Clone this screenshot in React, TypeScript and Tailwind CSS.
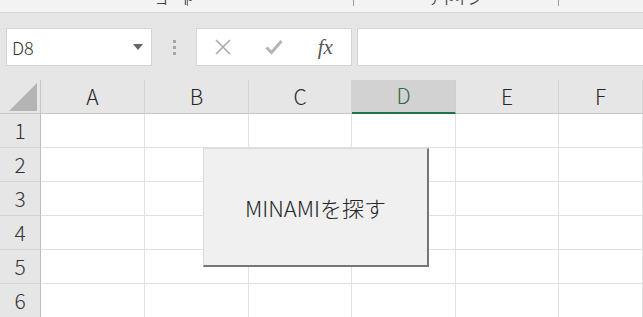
import React from 'react'

const FONT = { fontFamily: '"Noto Sans CJK JP", "Noto Sans", sans-serif' }

type Col = { key: string; width: string; selected?: boolean }

const COLUMNS: Col[] = [
  { key: 'A', width: 'w-[104px]' },
  { key: 'B', width: 'w-[104px]' },
  { key: 'C', width: 'w-[103px]' },
  { key: 'D', width: 'w-[104px]', selected: true },
  { key: 'E', width: 'w-[103px]' },
  { key: 'F', width: 'flex-1' },
]

const ROWS = [1, 2, 3, 4, 5, 6]

const CornerTriangle = () => (
  <svg width="28" height="28" viewBox="0 0 28 28" aria-hidden="true">
    <polygon points="28,0 28,28 0,28" fill="#b4b4b4" />
  </svg>
)

const FormulaBar = () => (
  <div className="flex h-[67px] items-start pt-[15px]">
    <div className="ml-[6px] flex h-[38px] w-[146px] items-center justify-between border border-[#d4d4d4] bg-white pl-[5px] pr-[8px]">
      <span className="text-[18px] font-light leading-none text-[#333]">D8</span>
      <svg width="10" height="6" viewBox="0 0 10 6" aria-hidden="true">
        <polygon points="0,0 10,0 5,6" fill="#666" />
      </svg>
    </div>
    <div className="flex h-[38px] w-[44px] flex-col items-center justify-center gap-[3px]">
      <span className="h-[3px] w-[3px] bg-[#a6a6a6]" />
      <span className="h-[3px] w-[3px] bg-[#a6a6a6]" />
      <span className="h-[3px] w-[3px] bg-[#a6a6a6]" />
    </div>
    <div className="flex h-[38px] w-[156px] items-center border border-[#d4d4d4] bg-white">
      <div className="flex w-[52px] justify-center">
        <svg width="16" height="16" viewBox="0 0 16 16" aria-hidden="true">
          <path d="M1 1 L15 15 M15 1 L1 15" stroke="#ababab" strokeWidth="1.6" />
        </svg>
      </div>
      <div className="flex w-[52px] justify-center">
        <svg width="18" height="16" viewBox="0 0 18 16" aria-hidden="true">
          <path d="M1.5 8.5 L6.5 13.5 L16.5 2" stroke="#b5b5b5" strokeWidth="3" fill="none" />
        </svg>
      </div>
      <div className="flex w-[52px] justify-center">
        <span
          className="text-[21px] italic leading-none text-[#555]"
          style={{ fontFamily: '"Liberation Serif", "DejaVu Serif", serif' }}
        >
          fx
        </span>
      </div>
    </div>
    <div className="ml-[5px] h-[38px] flex-1 border border-[#d4d4d4] border-r-0 bg-white" />
  </div>
)

// bottom edge of the ribbon: group labels are cut off by the window
const RibbonEdge = () => (
  <div className="relative h-[13px] overflow-hidden border-b border-[#d6d6d6] bg-[#f3f3f3] text-[13px] leading-[13px] text-[#444]">
    <span className="absolute left-[155px] top-[-8px]">コード</span>
    <span className="absolute left-[187px] top-0 h-[6px] w-px bg-[#7a7a7a]" />
    <span className="absolute left-[353px] top-0 h-[6px] w-px bg-[#9a9a9a]" />
    <span className="absolute left-[429px] top-[-8px]">アドイン</span>
    <span className="absolute left-[558px] top-0 h-[6px] w-px bg-[#9a9a9a]" />
  </div>
)

const ColumnHeaders = () => (
  <div className="flex h-[34px]">
    <div className="flex w-[41px] items-end justify-end border-r border-b border-[#c6c6c6] bg-[#e6e6e6] pb-[2px] pr-[3px]">
      <CornerTriangle />
    </div>
    {COLUMNS.map((col) =>
      col.selected ? (
        <div
          key={col.key}
          className={`${col.width} flex items-center justify-center border-r border-b-2 border-r-[#d0d0d0] border-b-[#217346] bg-[#d2d2d2] text-[21px] font-light text-[#2a6b4f]`}
        >
          {col.key}
        </div>
      ) : (
        <div
          key={col.key}
          className={`${col.width} flex items-center justify-center border-r border-b border-r-[#d4d4d4] border-b-[#c6c6c6] bg-[#e6e6e6] text-[21px] font-light text-[#262626]`}
        >
          {col.key}
        </div>
      )
    )}
  </div>
)

const GridRow = ({ n }: { n: number }) => (
  <div className="flex h-[34px]">
    <div className="flex w-[41px] items-center justify-center border-r border-b border-r-[#bdbdbd] border-b-[#d4d4d4] bg-[#e6e6e6] text-[21px] font-light text-[#333]">
      {n}
    </div>
    {COLUMNS.map((col) => (
      <div key={col.key} className={`${col.width} border-r border-b border-[#e1e1e1] bg-white`} />
    ))}
  </div>
)

export default function App() {
  return (
    <div className="relative h-[317px] w-[643px] overflow-hidden bg-[#e6e6e6]" style={FONT}>
      <RibbonEdge />
      <FormulaBar />
      <ColumnHeaders />
      {ROWS.map((n) => (
        <GridRow key={n} n={n} />
      ))}

      {/* form button floating over the sheet */}
      <button
        type="button"
        className="absolute left-[203px] top-[148px] flex h-[119px] w-[226px] items-center justify-center border-l border-t border-b-2 border-r-2 border-l-[#dadada] border-t-[#dadada] border-r-[#767676] border-b-[#767676] bg-[#f0f0f0] text-[22px] font-light text-[#262626]"
      >
        MINAMIを探す
      </button>
    </div>
  )
}
